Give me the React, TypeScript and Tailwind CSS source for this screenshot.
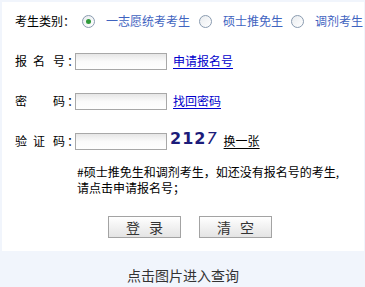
import React from "react";

const font = { fontFamily: '"Noto Sans CJK SC", "Noto Sans", sans-serif' };

function Radio({ checked }: { checked?: boolean }) {
  return (
    <span className="w-[13px] h-[13px] rounded-full border border-[#8a9bb0] bg-gradient-to-br from-[#e9ecef] to-[#ffffff] flex items-center justify-center shrink-0">
      {checked && <span className="w-[5px] h-[5px] rounded-full bg-[#2f9a3a]" />}
    </span>
  );
}

function Label({ chars }: { chars: [string, number][] }) {
  return (
    <div className="w-[60px] flex items-center text-[12px] text-black shrink-0">
      {chars.map(([c, ml], i) => (
        <span key={i} style={{ marginLeft: ml }}>
          {c}
        </span>
      ))}
    </div>
  );
}

function Input() {
  return (
    <div className="w-[92px] h-[17px] border border-[#a8a8a8] bg-gradient-to-b from-[#e6e6e6] via-[#fbfbfb] to-white shrink-0" />
  );
}

export default function App() {
  return (
    <div className="w-[365px] h-[287px] bg-[#f1f5fc] pt-[2px] pl-[2px] pr-[1px] overflow-hidden" style={font}>
      <div className="bg-white h-[249px] pt-[9px] pl-[13px]">
        {/* row 1 */}
        <div className="h-[20px] flex items-center text-[12px]">
          <span className="text-black w-[60px] shrink-0">考生类别：</span>
          <span className="ml-[7px]"><Radio checked /></span>
          <span className="ml-[11px] text-[#3f63bf]">一志愿统考考生</span>
          <span className="ml-[9px]"><Radio /></span>
          <span className="ml-[11px] text-[#3f63bf]">硕士推免生</span>
          <span className="ml-[8px]"><Radio /></span>
          <span className="ml-[11px] text-[#3f63bf]">调剂考生</span>
        </div>
        {/* row 2 */}
        <div className="h-[20px] mt-[20px] flex items-center">
          <Label chars={[["报", 0], ["名", 6], ["号", 8], ["：", 2]]} />
          <Input />
          <a className="ml-[6px] text-[12px] text-[#0000cc] underline underline-offset-2">申请报名号</a>
        </div>
        {/* row 3 */}
        <div className="h-[20px] mt-[20px] flex items-center">
          <Label chars={[["密", 0], ["码", 26], ["：", 2]]} />
          <Input />
          <a className="ml-[6px] text-[12px] text-[#0000cc] underline underline-offset-2">找回密码</a>
        </div>
        {/* row 4 */}
        <div className="h-[20px] mt-[20px] flex items-center">
          <Label chars={[["验", 0], ["证", 6], ["码", 8], ["：", 2]]} />
          <Input />
          <span className="ml-[3px] text-[16px] font-bold text-[#1c1c7a] leading-none -mt-[5px] tracking-[1px]" style={{ fontFamily: '"DejaVu Sans", sans-serif' }}>
            212<span className="italic font-normal">7</span>
          </span>
          <a className="ml-[6px] text-[12px] text-black underline underline-offset-2">换一张</a>
        </div>
        {/* note */}
        <div className="mt-[13px] pl-[62px] text-[12px] leading-[16px] text-black">
          <div>#硕士推免生和调剂考生，如还没有报名号的考生,</div>
          <div>请点击申请报名号；</div>
        </div>
        {/* buttons */}
        <div className="mt-[20px] pl-[93px] flex gap-[18px]">
          <button className="w-[73px] h-[22px] border border-[#a3a3a3] bg-gradient-to-b from-white to-[#e4e4e4] flex items-center justify-center gap-[9px] text-[14px] text-[#333]">
            <span>登</span>
            <span>录</span>
          </button>
          <button className="w-[73px] h-[22px] border border-[#a3a3a3] bg-gradient-to-b from-white to-[#e4e4e4] flex items-center justify-center gap-[9px] text-[14px] text-[#333]">
            <span>清</span>
            <span>空</span>
          </button>
        </div>
      </div>
      <div className="mt-[14px] text-center text-[14px] leading-[20px] text-[#333]">点击图片进入查询</div>
    </div>
  );
}
